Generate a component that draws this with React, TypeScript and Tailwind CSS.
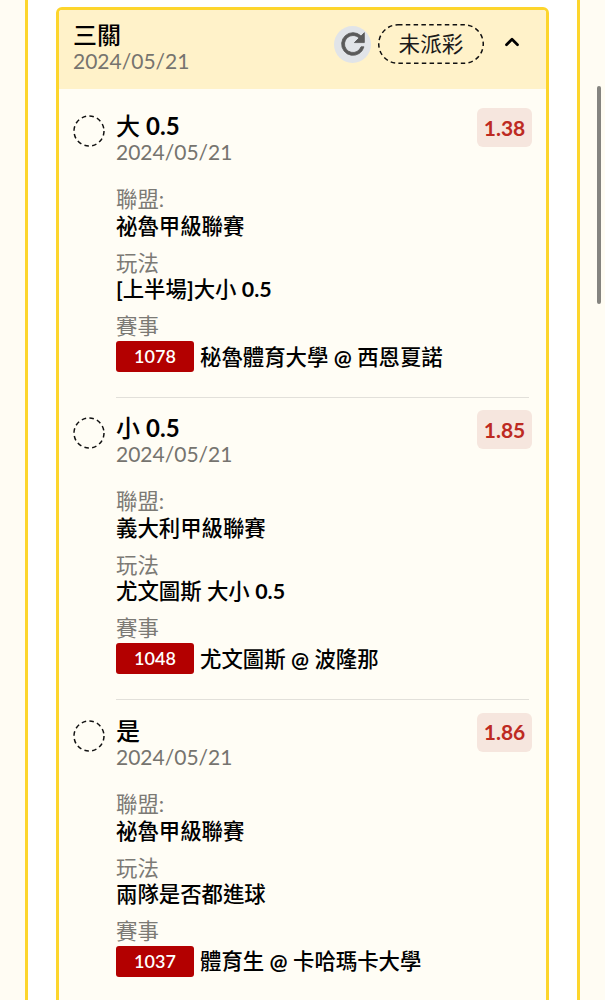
import { FC } from "react";
import { ChevronUp } from "lucide-react";

interface BetItem {
  pick: string;
  date: string;
  odds: string;
  league: string;
  market: string;
  code: string;
  match: string;
}

const items: BetItem[] = [
  {
    pick: "大 0.5",
    date: "2024/05/21",
    odds: "1.38",
    league: "祕魯甲級聯賽",
    market: "[上半場]大小 0.5",
    code: "1078",
    match: "秘魯體育大學 @ 西恩夏諾",
  },
  {
    pick: "小 0.5",
    date: "2024/05/21",
    odds: "1.85",
    league: "義大利甲級聯賽",
    market: "尤文圖斯 大小 0.5",
    code: "1048",
    match: "尤文圖斯 @ 波隆那",
  },
  {
    pick: "是",
    date: "2024/05/21",
    odds: "1.86",
    league: "祕魯甲級聯賽",
    market: "兩隊是否都進球",
    code: "1037",
    match: "體育生 @ 卡哈瑪卡大學",
  },
];

// latin runs come out too thin next to the CJK at the same weight
const Mixed: FC<{ text: string }> = ({ text }) => (
  <>
    {text.split(/([\x21-\x7e]+)/).map((part, i) =>
      i % 2 === 1 ? (
        <span key={i} className="font-bold">
          {part}
        </span>
      ) : (
        part
      )
    )}
  </>
);

const Row: FC<{ item: BetItem; last: boolean }> = ({ item, last }) => {
  return (
    <div className="flex items-start">
      <svg viewBox="0 0 32 32" className="mt-[7px] ml-[14px] h-[32px] w-[32px] shrink-0" fill="none">
        <circle cx="16" cy="16" r="15" stroke="#111" strokeWidth="1.5" strokeDasharray="4.5 3.35" />
      </svg>
      <div
        className={`ml-[11px] mr-[17px] flex-1 pb-[25px] ${
          last ? "" : "border-b border-[#e2e0da]"
        }`}
      >
        <div className="flex items-start justify-between">
          <div className="pt-[3px]">
            <div className="h-[30px] text-[24px] leading-[30px] font-medium text-black">
              <Mixed text={item.pick} />
            </div>
            <div className="mt-[-2px] h-[26px] text-[21px] leading-[26px] text-[#76746f]">
              {item.date}
            </div>
          </div>
          <div className="mr-[-3px] flex h-[39px] w-[55px] items-center justify-center rounded-[6px] bg-[#f6e6de] text-[21px] font-bold text-[#bd2a22]">
            {item.odds}
          </div>
        </div>
        <div className="mt-[21px] text-[21.4px] leading-[26px] text-[#7c7a75]">聯盟:</div>
        <div className="mt-[1px] text-[21.4px] leading-[26px] font-medium text-black">{item.league}</div>
        <div className="mt-[11px] text-[21.4px] leading-[26px] text-[#7c7a75]">玩法</div>
        <div className="text-[21.4px] leading-[26px] font-medium text-black">
          <Mixed text={item.market} />
        </div>
        <div className="mt-[11px] text-[21.4px] leading-[26px] text-[#7c7a75]">賽事</div>
        <div className="mt-[2px] flex items-center">
          <span className="flex h-[31px] w-[78px] items-center justify-center rounded-[3px] bg-[#b30000] text-[18px] font-semibold text-white">
            {item.code}
          </span>
          <span className="ml-[6px] text-[21.4px] leading-[26px] font-medium text-black">
            <Mixed text={item.match} />
          </span>
        </div>
      </div>
    </div>
  );
};

export default function App() {
  return (
    <div className="relative h-[1000px] w-[605px] overflow-hidden bg-[#fffcf3] font-['Lato','Noto_Sans_CJK_TC',sans-serif]">
      <div className="mx-[25px] h-full border-x-[3px] border-[#fdd52c] bg-white px-[28px] pt-[7px]">
        <div className="h-[1100px] overflow-hidden rounded-t-[6px] border-[3px] border-[#fdd52c] bg-[#fffdf5]">
          <div className="flex h-[79px] items-start justify-between bg-[#fff2c9] pt-[10px] pl-[14px]">
            <div>
              <div className="h-[30px] text-[24px] leading-[30px] font-medium text-black">三關</div>
              <div className="mt-[-2px] text-[21px] leading-[26px] text-[#76746f]">2024/05/21</div>
            </div>
            <div className="mr-[23px] mt-[4px] flex items-center">
              <div className="flex h-[37px] w-[37px] items-center justify-center rounded-full bg-[#e1e4e8]">
                <svg viewBox="0 0 24 24" className="h-[34px] w-[34px]" fill="#5a5a5a" stroke="#5a5a5a" strokeWidth="0.6">
                  <path d="M17.65 6.35A7.96 7.96 0 0 0 12 4a8 8 0 1 0 7.73 10h-2.08A6 6 0 1 1 12 6c1.66 0 3.14.69 4.22 1.78L13 11h7V4l-2.35 2.35z" />
                </svg>
              </div>
              <div className="relative ml-[7px] flex h-[40px] w-[106px] items-center justify-center text-[21.6px] text-[#1a1a1a]">
                未派彩
                <svg viewBox="0 0 106 40" className="absolute inset-0 h-full w-full" fill="none">
                  <rect x="0.75" y="0.75" width="104.5" height="38.5" rx="19.25" stroke="#111" strokeWidth="1.5" strokeDasharray="4.5 3.3" />
                </svg>
              </div>
              <ChevronUp className="ml-[17px] mb-[4px] h-[22px] w-[22px] text-black" strokeWidth={3} />
            </div>
          </div>
          <div className="flex flex-col gap-[12.3px] pt-[19px]">
            {items.map((item, i) => (
              <Row key={item.code} item={item} last={i === items.length - 1} />
            ))}
          </div>
        </div>
      </div>
      <div className="absolute top-[86px] left-[597px] h-[218px] w-[4px] rounded-full bg-[#85847f]" />
    </div>
  );
}
